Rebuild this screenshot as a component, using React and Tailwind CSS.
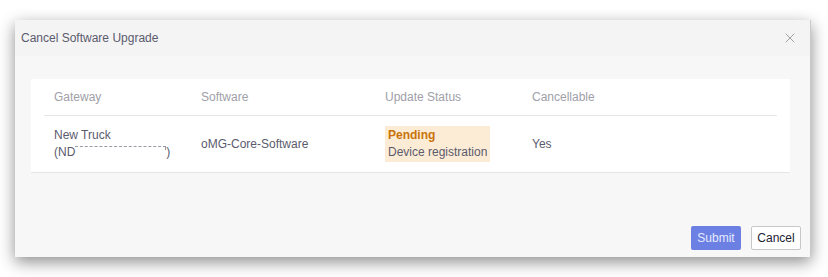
import { X } from 'lucide-react'

const ROWS = [
  {
    id: 1,
    gateway: 'New Truck',
    software: 'oMG-Core-Software',
    status: 'Pending',
    detail: 'Device registration',
    cancellable: 'Yes',
  },
]

function CancelUpgradeModal() {
  return (
    <div className="flex w-[796px] flex-col border-r border-[#c9c9cc] bg-[#f7f7f7] shadow-[0_5px_15px_rgba(0,0,0,0.45)]">
      <div className="flex h-[36px] items-center justify-between bg-[#f4f4f4] pl-[6px] pr-[12px]">
        <h2 className="m-0 text-[12px] font-normal text-[#5b5b6e]">Cancel Software Upgrade</h2>
        <button type="button" className="text-[#9a9a9a]" aria-label="Close">
          <X className="h-[16px] w-[16px]" strokeWidth={1.4} />
        </button>
      </div>

      <div className="ml-[16px] mr-[20px] mt-[23px] border-b border-[#e6e6e6] bg-white px-[13px]">
        <table className="w-full border-collapse text-left text-[12px]">
          <thead>
            <tr className="h-[36px] border-b border-[#e6e6e6] text-[#a0a0a8]">
              <th className="w-[147px] px-[10px] pt-[1px] font-normal">Gateway</th>
              <th className="w-[184px] px-[10px] font-normal">Software</th>
              <th className="w-[147px] px-[10px] font-normal">Update Status</th>
              <th className="px-[10px] font-normal">Cancellable</th>
            </tr>
          </thead>
          <tbody>
            {ROWS.map((row) => (
              <tr key={row.id} className="h-[57px] text-[#5b5b6e]">
                <td className="px-[10px] pt-[1px] leading-[17px]">
                  <div>{row.gateway}</div>
                  <div className="flex items-start">
                    (ND
                    <span className="mt-[2px] inline-block h-[4px] w-[91px] border-t border-r border-dashed border-[#9a9aa6]" />)
                  </div>
                </td>
                <td className="px-[10px]">{row.software}</td>
                <td className="px-[10px]">
                  <div className="inline-block bg-[#fdecd5] px-[3px] py-[1px] leading-[17px]">
                    <div className="font-bold text-[#c8730a]">{row.status}</div>
                    <div>{row.detail}</div>
                  </div>
                </td>
                <td className="px-[10px]">{row.cancellable}</td>
              </tr>
            ))}
          </tbody>
        </table>
      </div>

      <div className="mt-[53px] mb-[7px] flex justify-end gap-[10px] pr-[9px]">
        <button
          type="button"
          className="h-[24px] w-[50px] rounded-[2px] bg-[#6b80e2] text-[12px] text-[#e6eaff]"
        >
          Submit
        </button>
        <button
          type="button"
          className="h-[24px] w-[50px] rounded-[2px] border border-[#c8c8c8] bg-white text-[12px] text-[#222233]"
        >
          Cancel
        </button>
      </div>
    </div>
  )
}

export default function App() {
  return (
    <div className="h-[277px] w-[828px] overflow-hidden bg-white pl-[15px] pt-[20px] font-['Liberation_Sans',Arial,sans-serif]">
      <CancelUpgradeModal />
    </div>
  )
}
